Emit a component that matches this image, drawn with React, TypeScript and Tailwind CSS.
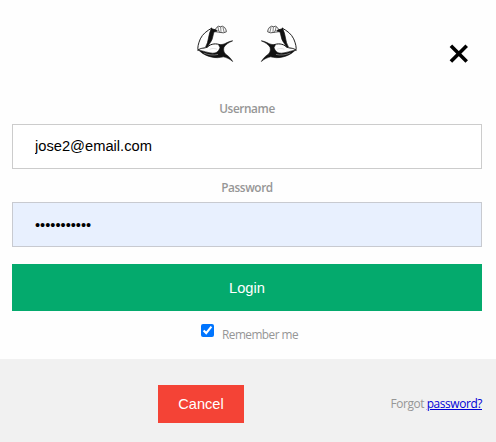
import React from "react";

function Arm({ flipped = false }: { flipped?: boolean }) {
  return (
    <svg
      viewBox="30 26 114 122"
      className={`h-[41px] w-[38px] ${flipped ? "-scale-x-100" : ""}`}
      fill="none"
      stroke="#111"
      strokeLinecap="round"
      strokeLinejoin="round"
      aria-hidden="true"
    >
      <path d="M77 41C63 49 50 58 43 73C37 87 34 99 36 107" strokeWidth="2.8" />
      <path d="M76 42L88 46C79 57 83 72 73 84L63 99L59 97C69 81 66 61 76 42Z" fill="#111" strokeWidth="2" />
      <path d="M36 107C46 98 55 103 65 97C75 87 92 86 102 91" strokeWidth="3" />
      <path d="M38 107C54 109 64 115 80 116C94 116 98 109 102 100L98 91L108 90C119 89 126 80 140 79C128 84 119 90 114 98C111 106 114 114 119 119C128 125 135 132 140 141C130 132 121 129 112 127C91 133 60 129 38 107Z" fill="#111" strokeWidth="1.8" />
      <path d="M54 116C68 122 82 123 95 120" stroke="#999" strokeWidth="2" />
      <path d="M87 46L93 38L98 35L103 37L109 35L116 39L120 46L121 52L112 55L98 53L91 52" stroke="#333" strokeWidth="2.5" />
      <path d="M96 38L98 48M104 38L105 51M111 39L114 52M98 48L101 53" stroke="#444" strokeWidth="2" />
      <path d="M85 46L94 47L90 52L84 52Z" fill="#111" strokeWidth="1.5" />
      <path d="M72 104C79 101 86 101 92 104" stroke="#aaa" strokeWidth="1" />
    </svg>
  );
}

export default function App() {
  return (
    <div className="flex h-[442px] w-[496px] flex-col overflow-hidden bg-[#fefefe] font-['Open_Sans','Noto_Sans',sans-serif] text-[12px] text-[#969696]">
      <header className="flex h-[94px] items-start pt-[23px]">
        <div className="ml-[196px] flex gap-[26px]">
          <Arm />
          <Arm flipped />
        </div>
        <button aria-label="Close" className="mt-[21px] ml-[150px] flex h-[20px] w-[22px] items-center justify-center">
          <svg viewBox="0 0 22 20" className="h-[20px] w-[22px]" stroke="#000" strokeWidth="3.6">
            <path d="M2.9 1.7L18.7 17.5M18.7 1.7L2.9 17.5" />
          </svg>
        </button>
      </header>
      <main className="flex h-[265px] flex-col pr-[14px] pl-[12px]">
        <label htmlFor="username" className="flex h-[30px] items-center justify-center text-[11.8px] font-semibold tracking-[-0.4px]">
          Username
        </label>
        <input
          id="username"
          type="text"
          defaultValue="jose2@email.com"
          className="h-[45px] w-full border border-[#ccc] bg-white px-[22px] pb-[1px] font-['Liberation_Sans',Arial,sans-serif] text-[14.7px] text-black outline-none"
        />
        <label htmlFor="password" className="flex h-[33px] items-center justify-center pt-[4px] text-[11.8px] font-semibold tracking-[-0.4px]">
          Password
        </label>
        <input
          id="password"
          type="password"
          defaultValue="musclearms1"
          className="h-[45px] w-full border border-[#c8cad0] bg-[#e8f0fe] px-[22px] font-['Liberation_Sans',Arial,sans-serif] text-[14.6px] text-black outline-none"
        />
        <button className="mt-[17px] h-[47px] w-full bg-[#04aa6d] pt-[1px] font-['Liberation_Sans',Arial,sans-serif] text-[14.7px] text-white">
          Login
        </button>
        <label className="mt-[12px] flex h-[22px] pl-[189px]">
          <input type="checkbox" defaultChecked className="mt-px h-[13px] w-[13px] accent-[#0075ff]" />
          <span className="ml-[8px] pt-[2px] text-[11.8px] leading-[18px] tracking-[-0.5px] whitespace-nowrap">Remember me</span>
        </label>
      </main>
      <footer className="flex h-[83px] items-start bg-[#f1f1f1] pt-[26px] pr-[14px] pl-[158px]">
        <button className="h-[38px] w-[86px] bg-[#f44336] pt-[1px] font-['Liberation_Sans',Arial,sans-serif] text-[14.6px] text-white">
          Cancel
        </button>
        <p className="mt-[9px] ml-auto text-[11.9px] leading-[18px] tracking-[-0.4px] whitespace-nowrap">
          Forgot{" "}
          <a href="#" className="text-[#0000d6] underline">
            password?
          </a>
        </p>
      </footer>
    </div>
  );
}
